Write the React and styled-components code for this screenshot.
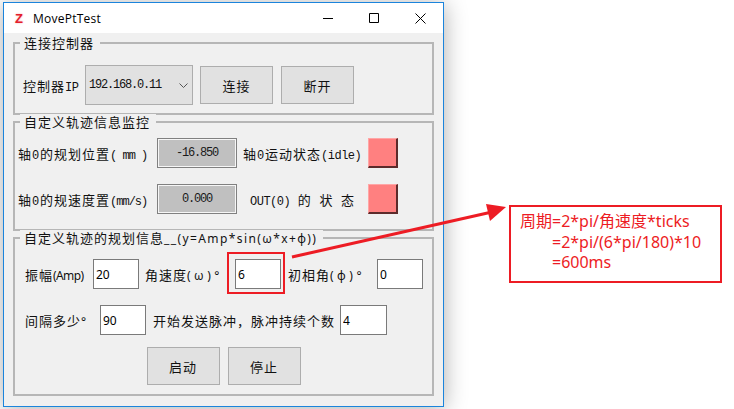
import React from "react";
import styled, { createGlobalStyle } from "styled-components";

const cjk = '"Noto Sans CJK SC", "Noto Sans", sans-serif';
const red = "#ed1c24";

const GlobalStyle = createGlobalStyle`
  html, body {
    margin: 0;
    padding: 0;
    background: #fff;
    overflow: hidden;
  }
`;

const Desktop = styled.div`
  position: relative;
  width: 734px;
  height: 409px;
  padding: 2px 0 0 3px;
  box-sizing: border-box;
  font-family: ${cjk};
  font-size: 13px;
  letter-spacing: 1px;
  color: #111;
  overflow: hidden;
`;

const Win = styled.div`
  width: 441px;
  height: 405px;
  box-sizing: border-box;
  border: 1px solid #1b84dc;
  background: #f0f0f0;
  box-shadow: 0 2px 22px rgba(0, 0, 0, 0.32);
`;

const TitleBar = styled.div`
  display: flex;
  align-items: center;
  height: 30px;
  background: #fff;
  padding-left: 11px;
`;

const AppIcon = styled.span`
  width: 18px;
  font: bold 13px "Liberation Sans", sans-serif;
  color: #e3202c;
  text-shadow: 0 0 2px #f7a8ae;
`;

const AppName = styled.span`
  flex: 1;
  font: 12px "Open Sans", sans-serif;
  letter-spacing: 0.25px;
  color: #000;
`;

const WinBtn = styled.div`
  display: flex;
  align-items: center;
  justify-content: center;
  width: 46px;
  height: 30px;
`;

const Body = styled.div`
  display: flex;
  flex-direction: column;
  gap: 6px;
  padding: 9px 9px 10px;
`;

const Group = styled.div`
  position: relative;
  display: flex;
  flex-direction: column;
  box-sizing: border-box;
  height: ${(p) => p.$h}px;
  border: 2px solid #b6b6b6;
  padding: ${(p) => p.$pad};
  gap: ${(p) => p.$gap || 0}px;
`;

const Legend = styled.span`
  position: absolute;
  left: 5px;
  top: -9px;
  height: 16px;
  line-height: 16px;
  padding: 0 6px 0 4px;
  background: #f0f0f0;
  white-space: nowrap;
`;

const Row = styled.div`
  display: flex;
  align-items: center;
  gap: ${(p) => p.$gap || 0}px;
  justify-content: ${(p) => p.$justify || "flex-start"};
  margin-top: ${(p) => p.$mt || 0}px;
  padding-right: ${(p) => p.$pr || 0}px;
`;

const Label = styled.span`
  flex: none;
  width: ${(p) => p.$w}px;
  padding-left: ${(p) => p.$indent || 0}px;
  box-sizing: border-box;
  white-space: pre;
  word-spacing: ${(p) => p.$ws || 0}px;
`;

const Lat = styled.span`
  font-family: "Liberation Mono", monospace;
  font-size: 12px;
  letter-spacing: ${(p) => p.$ls ?? -1}px;
`;

const Sans = styled.span`
  font-family: "Noto Sans", sans-serif;
  font-size: 12px;
  letter-spacing: ${(p) => p.$ls ?? 1.4}px;
`;

const Combo = styled.div`
  display: flex;
  align-items: center;
  justify-content: space-between;
  flex: none;
  width: 108px;
  height: 40px;
  box-sizing: border-box;
  border: 1px solid #adadad;
  background: #e1e1e1;
  padding: 0 4px 0 3px;
  font-family: "Liberation Mono", monospace;
  font-size: 12px;
  letter-spacing: -1.2px;
`;

const Btn = styled.button`
  flex: none;
  width: 73px;
  height: 38px;
  margin-left: ${(p) => p.$ml || 0}px;
  border: 1px solid #adadad;
  background: #e1e1e1;
  padding: 0;
  font-family: ${cjk};
  font-size: 13px;
  letter-spacing: 1px;
  color: #111;
`;

const Readout = styled.div`
  flex: none;
  width: 80px;
  height: 30px;
  line-height: 28px;
  box-sizing: border-box;
  border: 1px solid #808080;
  box-shadow: inset 0 0 0 1px #f6f6f6;
  background: #c0c0c0;
  text-align: center;
  font-family: "Liberation Mono", monospace;
  font-size: 12px;
  letter-spacing: -1.2px;
  color: #1a1a1a;
`;

const Swatch = styled.div`
  flex: none;
  width: 30px;
  height: 30px;
  box-sizing: border-box;
  background: #ff8080;
  border-style: solid;
  border-width: 1px 2px 2px 1px;
  border-color: #ffa6a6 #5c2b2b #5c2b2b #ffa6a6;
`;

const Field = styled.input`
  flex: none;
  width: ${(p) => p.$w || 46}px;
  height: 30px;
  box-sizing: border-box;
  border: 1px solid #7a7a7a;
  background: #fff;
  padding: 0 0 0 2px;
  margin: 0;
  outline: none;
  font-family: "Noto Sans", sans-serif;
  font-size: 12px;
  color: #000;
`;

const Highlight = styled.span`
  position: relative;
  display: flex;
  flex: none;

  &::after {
    content: "";
    position: absolute;
    left: -8px;
    right: -4px;
    top: -7px;
    bottom: -5px;
    border: 2px solid ${red};
  }
`;

const Arrow = styled.svg`
  position: absolute;
  left: 0;
  top: 0;
  pointer-events: none;
`;

const Note = styled.div`
  position: absolute;
  left: 509px;
  top: 205px;
  width: 213px;
  height: 78px;
  box-sizing: border-box;
  border: 2px solid ${red};
  background: #fff;
  padding: 4px 0 0 9px;
  font-family: "Noto Sans", ${cjk};
  font-size: 16px;
  line-height: 20.5px;
  letter-spacing: 0;
  color: ${red};
`;

const NoteLine = styled.div`
  padding-left: ${(p) => p.$indent || 0}px;
  white-space: nowrap;
`;

const Minimize = () => (
  <svg width="10" height="10" viewBox="0 0 10 10">
    <path d="M0 5.5h10" stroke="#000" fill="none" />
  </svg>
);

const Maximize = () => (
  <svg width="10" height="10" viewBox="0 0 10 10">
    <path d="M.5.5h9v9h-9z" stroke="#000" fill="none" />
  </svg>
);

const Close = () => (
  <svg width="11" height="11" viewBox="0 0 11 11">
    <path d="M.5.5l10 10M10.500.5l-10 10" stroke="#000" strokeWidth="1" fill="none" />
  </svg>
);

const Chevron = () => (
  <svg width="9" height="5" viewBox="0 0 9 5">
    <path d="M.5.500l4 4 4-4" stroke="#555" fill="none" />
  </svg>
);

export default function App() {
  return (
    <Desktop>
      <GlobalStyle />
      <Win>
        <TitleBar>
          <AppIcon>Z</AppIcon>
          <AppName>MovePtTest</AppName>
          <WinBtn>
            <Minimize />
          </WinBtn>
          <WinBtn>
            <Maximize />
          </WinBtn>
          <WinBtn>
            <Close />
          </WinBtn>
        </TitleBar>
        <Body>
          <Group $h={73} $pad="21px 0 0 8px">
            <Legend>连接控制器</Legend>
            <Row>
              <Label $w={62}>
                控制器<Lat $ls={-0.4}>IP</Lat>
              </Label>
              <Combo>
                192.168.0.11
                <Chevron />
              </Combo>
              <Btn $ml={7}>连接</Btn>
              <Btn $ml={8}>断开</Btn>
            </Row>
          </Group>

          <Group $h={110} $pad="15px 0 0 3px" $gap={16}>
            <Legend>自定义轨迹信息监控</Legend>
            <Row>
              <Label $w={139}>
                轴<Lat $ls={0.8}>0</Lat>的规划位置<Lat>( mm )</Lat>
              </Label>
              <Readout>-16.850</Readout>
              <Label $w={131} $indent={6}>
                轴<Lat $ls={0.8}>0</Lat>运动状态<Lat $ls={-0.5}>(idle)</Lat>
              </Label>
              <Swatch />
            </Row>
            <Row>
              <Label $w={139}>
                轴<Lat $ls={0.8}>0</Lat>的规速度置<Lat>(mm/s)</Lat>
              </Label>
              <Readout>0.000</Readout>
              <Label $w={131} $indent={13} $ws={3.7}>
                <Lat $ls={-0.5}>OUT(0)</Lat> 的 状 态
              </Label>
              <Swatch />
            </Row>
          </Group>

          <Group $h={159} $pad="20px 0 0 10px" $gap={16}>
            <Legend>
              自定义轨迹的规划信息<Sans>__(y=Amp*sin(ω*x+φ))</Sans>
            </Legend>
            <Row>
              <Label $w={68}>
                振幅<Sans $ls={-0.6}>(Amp)</Sans>
              </Label>
              <Field readOnly value="20" />
              <Label $w={96} $indent={6}>
                角速度<Sans $ls={3.5}>(ω)°</Sans>
              </Label>
              <Highlight>
                <Field readOnly value="6" />
              </Highlight>
              <Label $w={96} $indent={7}>
                初相角<Sans $ls={3.5}>(φ)°</Sans>
              </Label>
              <Field readOnly value="0" />
            </Row>
            <Row>
              <Label $w={75}>
                间隔多少<Sans>°</Sans>
              </Label>
              <Field readOnly value="90" />
              <Label $w={194} $indent={7}>
                开始发送脉冲，脉冲持续个数
              </Label>
              <Field readOnly value="4" $w={47} />
            </Row>
            <Row $gap={8} $justify="center" $mt={-4} $pr={10}>
              <Btn>启动</Btn>
              <Btn>停止</Btn>
            </Row>
          </Group>
        </Body>
      </Win>

      <Arrow width="734" height="409" viewBox="0 0 734 409">
        <path d="M292 257L492 212" stroke={red} strokeWidth="3" fill="none" />
        <path d="M506 207L486 204L490 221z" fill={red} />
      </Arrow>

      <Note>
        <NoteLine>周期=2*pi/角速度*ticks</NoteLine>
        <NoteLine $indent={32}>=2*pi/(6*pi/180)*10</NoteLine>
        <NoteLine $indent={32}>=600ms</NoteLine>
      </Note>
    </Desktop>
  );
}
